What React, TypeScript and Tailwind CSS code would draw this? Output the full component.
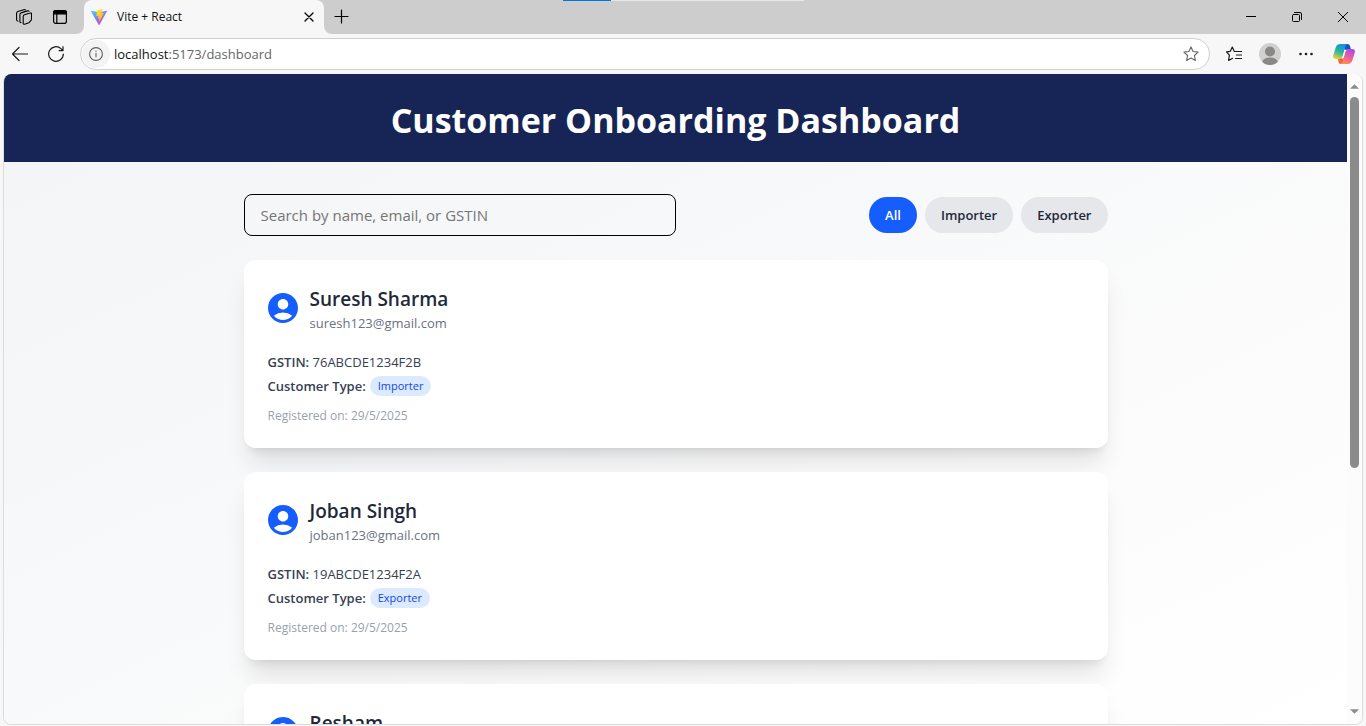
import React from "react";
import { MdAccountCircle } from "react-icons/md";

type Customer = { name: string; email?: string; gstin?: string; type?: string; date?: string };

const customers: Customer[] = [
  { name: "Suresh Sharma", email: "suresh123@gmail.com", gstin: "76ABCDE1234F2B", type: "Importer", date: "29/5/2025" },
  { name: "Joban Singh", email: "joban123@gmail.com", gstin: "19ABCDE1234F2A", type: "Exporter", date: "29/5/2025" },
  { name: "Resham" },
];

const stroke = { fill: "none", stroke: "currentColor", strokeLinecap: "round", strokeLinejoin: "round" } as const;

function TabStrip() {
  return (
    <div className="relative flex h-[34px] items-stretch bg-[#cdcdcd]">
      <div className="absolute top-0 left-[563px] flex h-px w-[241px] bg-[#e6e6e6]">
        <div className="w-12 bg-[#0078d7]" />
      </div>
      <div className="flex w-[84px] bg-[#f7f7f7]">
        <div className="flex flex-1 items-center rounded-br-lg bg-[#cdcdcd] pl-4">
          <button aria-label="Workspaces" className="mr-5 h-4 w-4">
            <svg viewBox="0 0 16 16" className="h-4 w-4" {...stroke} strokeWidth="1.1">
              <path d="M8.400 5.800 14.300 4Q15.500 3.700 15.500 4.800V10.200Q15.500 10.800 15 11.400L12.800 13.800 8.600 15.200Q7.200 15.500 7.200 14.200V7.400Q7.200 6.200 8.400 5.800Z" />
              <path d="M5 13.600Q3.900 13.600 3.900 12.400V5.600Q3.900 4.300 5 3.900L11.600 1.900Q12.600 1.700 13 2.200" />
              <path d="M2 12.200Q.6 12 .6 10.500V4.300Q.6 3 1.800 2.500L7.800.7Q8.800.4 9.400.9" />
            </svg>
          </button>
          <button aria-label="Tab actions" className="h-4 w-4">
            <svg viewBox="0 0 16 16" className="h-4 w-4" {...stroke} strokeWidth="1.2">
              <rect x="1.600" y="1.600" width="12.800" height="12.800" rx="2.200" />
              <path d="M1.600 5V3.600q0-2 2-2h8.800q2 0 2 2V5Z" fill="currentColor" />
              <path d="M4.800 5v9.400" />
            </svg>
          </button>
        </div>
      </div>
      <div className="flex w-60 items-center rounded-t-lg bg-[#f7f7f7] pr-[7px] pl-[7px]">
        <svg viewBox="0 0 32 32" className="h-4 w-4">
          <defs>
            <linearGradient id="vite-a" x1="0" y1="0" x2=".6" y2="1">
              <stop offset="0" stopColor="#41d1ff" />
              <stop offset="1" stopColor="#bd34fe" />
            </linearGradient>
            <linearGradient id="vite-b" x1=".4" y1="0" x2=".6" y2="1">
              <stop offset="0" stopColor="#ffea83" />
              <stop offset=".1" stopColor="#ffdd35" />
              <stop offset="1" stopColor="#ffa800" />
            </linearGradient>
          </defs>
          <path fill="url(#vite-a)" d="M31.8 4.8 16.8 31.5c-.3.5-1.1.6-1.4 0L.1 4.8c-.3-.6.2-1.3.9-1.2l15 2.7h.3l14.7-2.7c.7-.1 1.2.6.8 1.2Z" />
          <path fill="url(#vite-b)" d="m23 .1-11.1 2.2a.4.4 0 0 0-.3.4l-.7 11.5c0 .3.2.5.5.4l3.1-.7c.3-.1.5.2.5.5l-1 4.5c0 .3.2.6.5.5l1.9-.6c.3-.1.6.2.5.5L15.500 26.400c-.1.4.5.7.7.3l.2-.3 9-18c.2-.3-.1-.6-.5-.6l-3.200.6c-.3.1-.5-.2-.5-.5l2.100-7.200c.1-.3-.1-.6-.3-.6Z" />
        </svg>
        <span className="ml-[10px] flex-1 text-xs text-[#111]">Vite + React</span>
        <button aria-label="Close tab" className="flex h-4 w-4 items-center justify-center">
          <svg viewBox="0 0 10 10" className="h-[10px] w-[10px]" {...stroke} strokeWidth="1.300"><path d="m1 1 8 8M9 1 1 9" /></svg>
        </button>
      </div>
      <div className="flex flex-1 bg-[#f7f7f7]">
        <div className="flex flex-1 items-center rounded-bl-lg bg-[#cdcdcd] pl-[10px]">
          <button aria-label="New tab" className="h-4 w-4">
            <svg viewBox="0 0 16 16" className="h-4 w-4" {...stroke} strokeWidth="1.200"><path d="M7.500 1v13M1 7.500h13" /></svg>
          </button>
        </div>
      </div>
      <div className="flex">
        <button aria-label="Minimize" className="flex w-[46px] items-center justify-center">
          <svg viewBox="0 0 10 10" className="h-[10px] w-[10px]" {...stroke} strokeWidth="1"><path d="M0 4.500h10" /></svg>
        </button>
        <button aria-label="Restore" className="flex w-[46px] items-center justify-center">
          <svg viewBox="0 0 10 10" className="h-[10px] w-[10px]" {...stroke} strokeWidth="1">
            <rect x=".5" y="2.500" width="7" height="7" rx="1" /><path d="M2.500.5H8q1.500 0 1.500 1.500v5.500" />
          </svg>
        </button>
        <button aria-label="Close" className="flex w-[46px] items-center justify-center">
          <svg viewBox="0 0 10 10" className="h-[10px] w-[10px]" {...stroke} strokeWidth="1"><path d="m0 0 10 10M10 0 0 10" /></svg>
        </button>
      </div>
    </div>
  );
}

const starPath = "m8 .9 2.100 4.600 5 .6-3.700 3.400 1 5L8 12l-4.400 2.500 1-5L.9 6.100l5-.6Z";

function Toolbar() {
  return (
    <div className="flex h-10 items-center bg-[#f7f7f7] pr-[11px] pl-3 text-[#1b1b1b]">
      <button aria-label="Back" className="h-4 w-4">
        <svg viewBox="0 0 16 16" className="h-4 w-4" {...stroke} strokeWidth="1.200"><path d="M15.500 8H.7M7 1.500.5 8 7 14.500" /></svg>
      </button>
      <button aria-label="Refresh" className="ml-5 h-4 w-4">
        <svg viewBox="0 0 16 16" className="h-4 w-4" {...stroke} strokeWidth="1.200"><path d="M15.300 8A7.300 7.300 0 1 1 12.900 2.600L15 4.600M15 .7v3.900h-3.900" /></svg>
      </button>
      <div className="ml-4 flex h-8 flex-1 items-center rounded-full border border-[#d0d0d0] bg-white pr-[10px] pl-px">
        <span className="flex h-7 w-7 items-center justify-center rounded-full bg-[#f3f3f3] text-[#5f5f5f]">
          <svg viewBox="0 0 14 14" className="h-[14px] w-[14px]" {...stroke} strokeWidth="1.100"><circle cx="7" cy="7" r="6.400" /><path d="M7 6.300v3.500M7 4.100v.2" /></svg>
        </span>
        <a href="#dashboard" className="ml-1 flex-1 pt-px text-[13px] text-[#666]"><span className="text-[#111]">localhost</span>:5173/dashboard</a>
        <button aria-label="Add to favorites" className="h-4 w-4 text-[#666]">
          <svg viewBox="0 0 16 16" className="h-4 w-4" {...stroke} strokeWidth="1.100"><path d={starPath} /></svg>
        </button>
      </div>
      <button aria-label="Favorites" className="ml-4 h-4 w-4">
        <svg viewBox="0 0 16 16" className="h-4 w-4" {...stroke} strokeWidth="1.200"><path d="M9.500 5.500 8.200 5.300 6.300 1 4.300 5.300.5 5.800l2.900 3.300-.8 5.400 4-2.200M9.500 5.500H16M10.500 9H16M9.500 12.500H16" /></svg>
      </button>
      <button aria-label="Profile" className="ml-[17px] h-[22px] w-[22px]">
        <svg viewBox="0 0 22 22" className="h-[22px] w-[22px]">
          <circle cx="11" cy="11" r="11" fill="#d2d0ce" /><circle cx="11" cy="8.500" r="5" fill="#8a8886" />
          <path fill="#8a8886" d="M3.200 18.700Q5 14.500 11 14.500t7.800 4.200Q15.500 22 11 22t-7.800-3.300Z" />
        </svg>
      </button>
      <button aria-label="Settings and more" className="ml-[17px] h-4 w-4">
        <svg viewBox="0 0 16 16" className="h-4 w-4" fill="currentColor"><circle cx="2.500" cy="8" r="1.300" /><circle cx="8" cy="8" r="1.300" /><circle cx="13.500" cy="8" r="1.300" /></svg>
      </button>
      <button aria-label="Copilot" className="ml-[19px] h-[22px] w-[22px]">
        <svg viewBox="0 0 22 22" className="h-[22px] w-[22px]">
          <defs>
            <linearGradient id="cp-a" x1=".6" y1="0" x2=".2" y2="1"><stop offset="0" stopColor="#168de8" /><stop offset=".5" stopColor="#24b7a1" /><stop offset="1" stopColor="#f4d22c" /></linearGradient>
            <linearGradient id="cp-b" x1=".8" y1="0" x2=".3" y2="1"><stop offset="0" stopColor="#a24ee8" /><stop offset=".5" stopColor="#ec5aa4" /><stop offset="1" stopColor="#ff924f" /></linearGradient>
          </defs>
          <path fill="#174fc4" d="M11 1h3.500q2 0 2.500 2l1 3.800H11.500Z" />
          <path fill="#f0653e" d="M5 15.200h6L10.500 21H7.500q-1.500-.2-2-2Z" />
          <path fill="url(#cp-a)" d="M7.500 1H15q-2 .3-2.600 2.500L9.800 13q-.9 3-3.800 3H3q-3.500 0-2.800-3.500L2.900 4Q4 1 7.500 1Z" />
          <path fill="url(#cp-b)" d="M14.500 21H7q2-.3 2.600-2.500L12.200 9q.9-3 3.800-3h3q3.500 0 2.800 3.500L19.100 18q-1.100 3-4.600 3Z" />
          <path fill="#f7f7f7" d="M13.600 7H11.600L9.900 12.800q-.5 1.700-1.700 2.400h2.200L12.100 9.300q.4-1.500 1.500-2.300Z" />
        </svg>
      </button>
    </div>
  );
}

function CustomerCard({ customer }: { customer: Customer }) {
  return (
    <article className="min-h-[188px] shrink-0 rounded-xl bg-white p-6 shadow-xl">
      <div className="flex items-center gap-3">
        <svg viewBox="2 2 20 20" className="h-[30px] w-[30px] text-[#155dfc]"><MdAccountCircle size={24} /></svg>
        <div>
          <h2 className="text-[19px] leading-[30px] font-semibold text-gray-800">{customer.name}</h2>
          <p className="min-h-[18px] text-[13px] leading-[18px] text-gray-500">{customer.email}</p>
        </div>
      </div>
      {customer.gstin && (
        <>
          <div className="mt-5 space-y-1 text-[13px] leading-5 text-gray-700">
            <p><span className="font-semibold">GSTIN:</span> {customer.gstin}</p>
            <p className="flex items-center gap-1">
              <span className="font-semibold">Customer Type:</span>
              <span className="rounded-full bg-blue-100 px-2 text-[11px] leading-5 text-blue-700">{customer.type}</span>
            </p>
          </div>
          <p className="mt-3 text-xs leading-4 text-gray-400">Registered on: {customer.date}</p>
        </>
      )}
    </article>
  );
}

export default function App() {
  return (
    <div className="flex h-screen flex-col overflow-hidden bg-[#f7f7f7] font-['Open_Sans','Noto_Sans',sans-serif]">
      <TabStrip />
      <Toolbar />
      <div className="mr-[3px] mb-px ml-[3px] flex min-h-0 flex-1 overflow-hidden rounded-lg border-x border-b border-[#dcdcdc]">
        <div className="flex-1 overflow-hidden bg-linear-to-br from-gray-100 to-white">
          <header className="bg-blue-950 px-6 pt-[26px] pb-[22px]">
            <h1 className="text-center text-[34px] leading-10 font-bold text-white">Customer Onboarding Dashboard</h1>
          </header>
          <main className="mx-auto max-w-4xl px-4 py-8">
            <div className="flex items-center justify-between">
              <input aria-label="Search customers" placeholder="Search by name, email, or GSTIN" className="h-[42px] w-1/2 rounded-lg border border-black bg-transparent px-4 text-[15px] placeholder:text-[#757575]" />
              <div className="flex gap-2 text-[13px] leading-5 font-semibold">
                <button className="rounded-full bg-[#155dfc] px-4 py-2 text-white">All</button>
                <button className="rounded-full bg-gray-200 px-4 py-2 text-gray-800">Importer</button>
                <button className="rounded-full bg-gray-200 px-4 py-2 text-gray-800">Exporter</button>
              </div>
            </div>
            <div className="mt-6 flex flex-col gap-6">
              {customers.map((c) => <CustomerCard key={c.name} customer={c} />)}
            </div>
          </main>
        </div>
        <div className="flex w-[15px] flex-col items-center bg-[#fcfcfc] pt-[10px] pb-[10px]">
          <svg viewBox="0 0 10 5" className="h-[5px] w-[9px]" fill="#8b8b8b"><path d="M0 5 5 0l5 5Z" /></svg>
          <div className="mt-2 h-[371px] w-[9px] rounded-full bg-[#8b8b8b]" />
          <svg viewBox="0 0 10 5" className="mt-auto h-[5px] w-[9px]" fill="#8b8b8b"><path d="m0 0 5 5 5-5Z" /></svg>
        </div>
      </div>
    </div>
  );
}
